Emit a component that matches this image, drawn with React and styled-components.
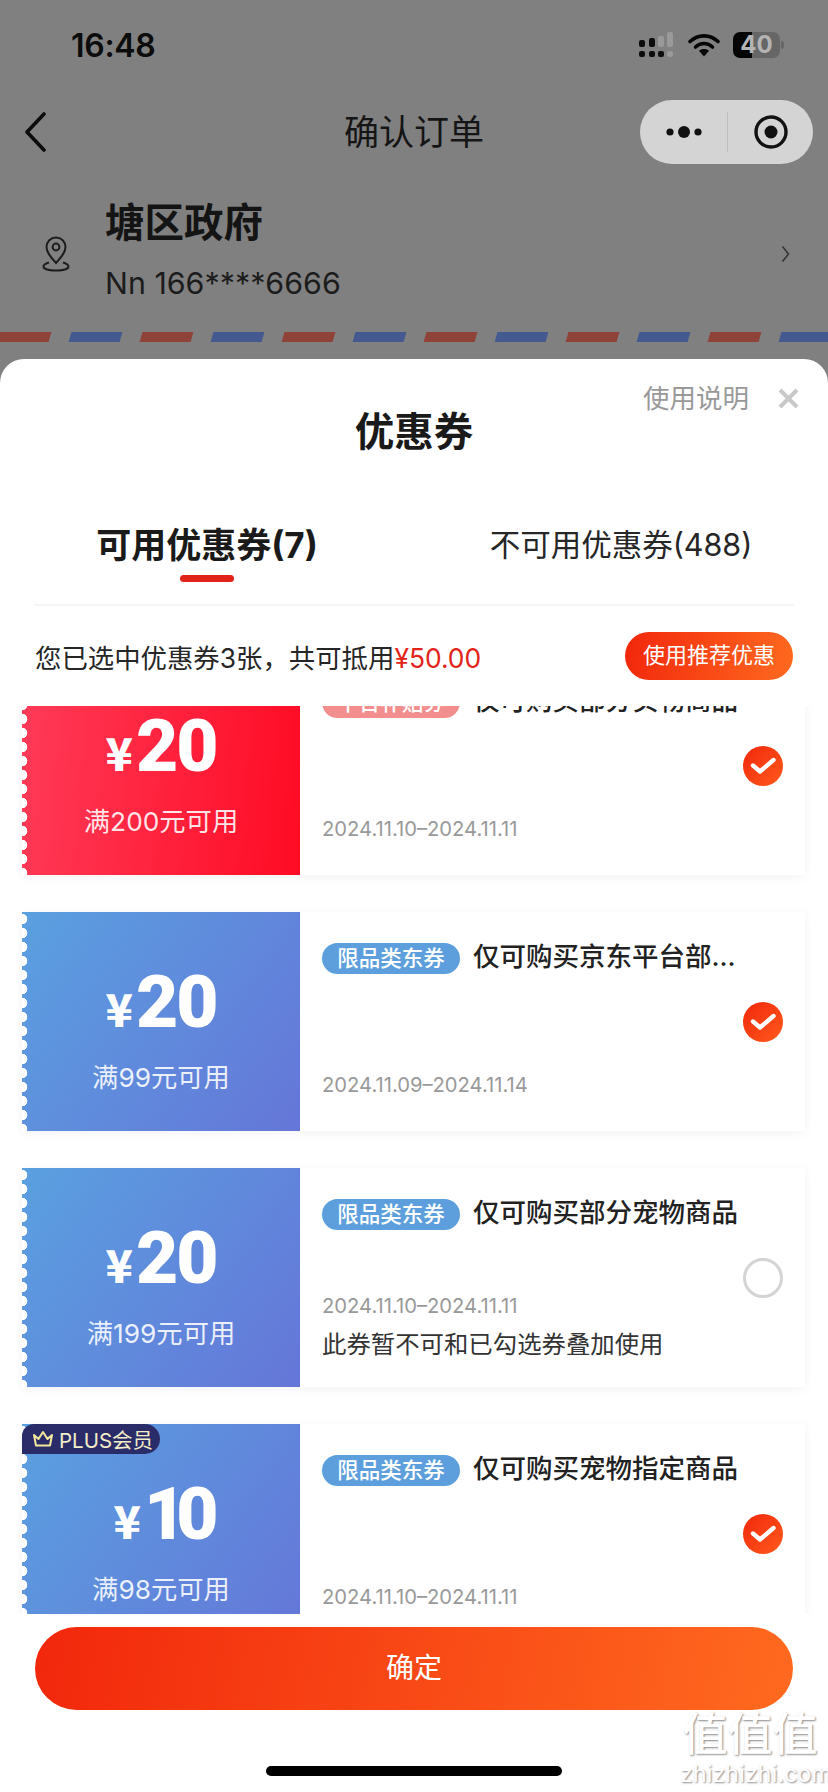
import React from "react";
import styled, { createGlobalStyle } from "styled-components";

const GlobalStyle = createGlobalStyle`
  html, body {
    margin: 0;
    padding: 0;
    background: #fff;
  }
  * {
    box-sizing: border-box;
  }
`;

const FONT = `Inter, "Noto Sans CJK SC", sans-serif`;
const CTA_GRADIENT = "linear-gradient(100deg, #f2270c 0%, #ff6a1f 100%)";

const Page = styled.div`
  position: relative;
  width: 828px;
  height: 1792px;
  overflow: hidden;
  display: flex;
  flex-direction: column;
  background: #808080;
  font-family: ${FONT};
  color: #111;
`;

const Backdrop = styled.div`
  height: 359px;
  flex: none;
`;

const StatusBar = styled.div`
  height: 90px;
  display: flex;
  align-items: center;
  justify-content: space-between;
  padding: 0 48px 0 71px;
`;

const Time = styled.div`
  font-size: 32px;
  font-weight: 600;
  letter-spacing: -0.3px;
  color: #0c0c0c;
`;

const StatusIcons = styled.div`
  display: flex;
  align-items: center;
  gap: 13px;
`;

const Battery = styled.div`
  position: relative;
  width: 47px;
  height: 26px;
  border-radius: 7px;
  background: linear-gradient(90deg, #050505 40%, #666 40%);
  color: #b4b4b4;
  font-size: 24px;
  font-weight: 700;
  line-height: 26px;
  text-align: center;

  &::after {
    content: "";
    position: absolute;
    right: -4px;
    top: 9px;
    width: 3px;
    height: 8px;
    border-radius: 0 3px 3px 0;
    background: #666;
  }
`;

const NavBar = styled.div`
  height: 83px;
  display: grid;
  grid-template-columns: 1fr auto 1fr;
  align-items: center;
`;

const BackButton = styled.div`
  display: flex;
  padding-left: 23px;
`;

const NavTitle = styled.div`
  font-size: 35px;
  line-height: 44px;
  color: #151515;
`;

const Capsule = styled.div`
  justify-self: end;
  margin-right: 15px;
  width: 173px;
  height: 64px;
  border-radius: 32px;
  background: #d4d4d4;
  display: grid;
  grid-template-columns: 87px 1px 85px;
  align-items: center;
  justify-items: center;
`;

const CapsuleDivider = styled.div`
  width: 1px;
  height: 40px;
  background: #bdbdbd;
`;

const Address = styled.div`
  margin-top: 24px;
  padding: 0 38px 0 42px;
  display: flex;
  align-items: center;

  & > svg {
    margin-top: 5px;
  }
`;

const AddressText = styled.div`
  flex: 1;
  margin-left: 35px;
  display: flex;
  flex-direction: column;
  gap: 12px;
`;

const AddressName = styled.div`
  font-size: 39.5px;
  line-height: 52px;
  font-weight: 700;
  color: #141414;
`;

const AddressPhone = styled.div`
  font-size: 30.4px;
  line-height: 44px;
  color: #1c1c1c;
`;

const Stripes = styled.div`
  margin: 27px 0 0 -1px;
  display: flex;
  gap: 20px;
`;

const Stripe = styled.div`
  flex: none;
  width: 51px;
  height: 10px;
  transform: skewX(-16deg);
  background: ${({ $blue }) => ($blue ? "#43598f" : "#8e4238")};
`;

const Sheet = styled.div`
  flex: 1;
  min-height: 0;
  display: flex;
  flex-direction: column;
  border-radius: 24px 24px 0 0;
  background: #fff;
`;

const SheetHead = styled.div`
  display: grid;
  grid-template-columns: 1fr auto 1fr;
  padding-top: 21px;
`;

const SheetTitle = styled.div`
  grid-column: 2;
  margin-top: 25px;
  font-size: 39.5px;
  line-height: 54px;
  font-weight: 700;
  color: #1a1a1a;
`;

const SheetActions = styled.div`
  grid-column: 3;
  justify-self: end;
  margin-right: 29px;
  height: 36px;
  display: flex;
  align-items: center;
  gap: 29px;
`;

const HelpLink = styled.div`
  font-size: 26.5px;
  line-height: 36px;
  color: #999;
`;

const Tabs = styled.div`
  margin-top: 56px;
  padding-bottom: 29px;
  display: grid;
  grid-template-columns: 1fr 1fr;
  justify-items: center;
`;

const Tab = styled.div`
  position: relative;
  font-size: ${({ $active }) => ($active ? "35px" : "30.5px")};
  font-weight: ${({ $active }) => ($active ? 700 : 400)};
  line-height: 60px;
  color: ${({ $active }) => ($active ? "#1a1a1a" : "#262626")};

  ${({ $active }) =>
    $active &&
    `
    &::after {
      content: "";
      position: absolute;
      left: 50%;
      bottom: -7px;
      width: 54px;
      height: 7px;
      margin-left: -27px;
      border-radius: 4px;
      background: #e2231a;
    }
  `}
`;

const Divider = styled.div`
  height: 2px;
  margin: 0 34px;
  background: #f5f5f5;
`;

const Summary = styled.div`
  height: 100px;
  padding: 0 35px;
  display: flex;
  align-items: center;
  justify-content: space-between;
`;

const SummaryText = styled.div`
  margin-top: 1px;
  font-size: 26.4px;
  color: #262626;
`;

const SummaryAmount = styled.span`
  color: #e2231a;
`;

const RecommendButton = styled.div`
  width: 168px;
  height: 48px;
  border-radius: 24px;
  background: ${CTA_GRADIENT};
  color: #fff;
  font-size: 22px;
  line-height: 47px;
  text-align: center;
`;

const CouponViewport = styled.div`
  flex: 1;
  min-height: 0;
  overflow: hidden;
`;

const CouponList = styled.div`
  margin-top: -50px;
  padding: 0 23px 0 22px;
  display: flex;
  flex-direction: column;
  gap: 37px;
`;

const Card = styled.div`
  flex: none;
  height: 219px;
  display: flex;
  background: #fff;
  box-shadow: 0 2px 10px rgba(0, 0, 0, 0.05);
`;

const Ticket = styled.div`
  position: relative;
  flex: none;
  width: 278px;
  padding-top: 50px;
  display: flex;
  flex-direction: column;
  align-items: center;
  color: #fff;
  background: ${({ $red }) =>
    $red
      ? "linear-gradient(95deg, #ff3b58 0%, #ff0b24 100%)"
      : "linear-gradient(125deg, #5aa0e0 0%, #6576d8 100%)"};

  &::before {
    content: "";
    position: absolute;
    left: 0;
    top: 0;
    bottom: 0;
    width: 6px;
    background: radial-gradient(circle at 0 50%, #fff 5px, transparent 5.6px) 0 0 / 6px 14px repeat-y;
  }
`;

const Amount = styled.div`
  height: 80px;
  display: flex;
  align-items: baseline;
  justify-content: center;
  gap: 3px;
  font-family: Roboto, sans-serif;
  font-weight: 900;
`;

const Yen = styled.span`
  font-family: "Noto Sans CJK SC", sans-serif;
  font-size: 45px;
  font-weight: 900;
  line-height: 80px;
`;

const AmountValue = styled.span`
  font-size: 73px;
  line-height: 80px;
  letter-spacing: ${({ $tight }) => ($tight ? "-10px" : "-2px")};
`;

const Threshold = styled.div`
  margin-top: 18px;
  font-size: 26.3px;
  line-height: 36px;
  color: rgba(255, 255, 255, 0.88);
`;

const PlusTag = styled.div`
  position: absolute;
  left: 0;
  top: 0;
  z-index: 1;
  height: 30px;
  width: 138px;
  padding-left: 10px;
  display: flex;
  align-items: center;
  gap: 5px;
  border-radius: 12px 15px 15px 0;
  background: #2a2c69;
  color: #f3edc8;
  font-size: 20.5px;
`;

const CardBody = styled.div`
  flex: 1;
  min-width: 0;
  display: flex;
  align-items: center;
  padding: 0 22px;
`;

const CardInfo = styled.div`
  flex: 1;
  min-width: 0;
  height: 100%;
  padding: 31px 0 ${({ $hasNote }) => ($hasNote ? "27px" : "32px")};
  display: flex;
  flex-direction: column;
`;

const TitleRow = styled.div`
  display: flex;
  align-items: flex-start;
  gap: 13px;
`;

const Badge = styled.div`
  flex: none;
  width: 138px;
  height: 31px;
  border-radius: 16px;
  background: ${({ $faded }) => ($faded ? "#f28e8e" : "#5c9fdc")};
  color: #fff;
  font-size: 21.5px;
  font-weight: 500;
  line-height: 30px;
  text-align: center;
`;

const CouponTitle = styled.div`
  margin-top: -2px;
  font-size: 26.5px;
  line-height: 31px;
  font-weight: 500;
  color: #222;
  white-space: nowrap;
`;

const Dates = styled.div`
  margin-top: auto;
  font-size: 20.2px;
  line-height: 28px;
  color: #999;
`;

const Note = styled.div`
  margin-top: 8px;
  font-size: 24.4px;
  line-height: 32px;
  color: #333;
`;

const Radio = styled.div`
  flex: none;
  width: 40px;
  height: 40px;
  border-radius: 50%;
  display: flex;
  align-items: center;
  justify-content: center;
  ${({ $checked }) =>
    $checked
      ? `background: linear-gradient(135deg, #f2270c 0%, #ff5a1c 100%);`
      : `border: 3px solid #d4d4d4;`}
`;

const Footer = styled.div`
  flex: none;
  height: 178px;
  padding: 13px 35px 0;
  display: flex;
  flex-direction: column;
  align-items: center;
`;

const ConfirmButton = styled.div`
  width: 100%;
  height: 83px;
  border-radius: 42px;
  background: ${CTA_GRADIENT};
  color: #fff;
  font-size: 28px;
  line-height: 83px;
  text-align: center;
`;

const HomeBar = styled.div`
  margin-top: 56px;
  width: 296px;
  height: 10px;
  border-radius: 5px;
  background: #000;
`;

const Watermark = styled.div`
  position: absolute;
  right: 8px;
  bottom: 6px;
  width: 140px;
  text-align: center;
  color: #fff;
  text-shadow: 1px 1px 2px #8a8a8a;
`;

const WatermarkGlyphs = styled.div`
  margin-bottom: 4px;
  font-size: 45px;
  line-height: 46px;
  font-weight: 500;
`;

const WatermarkSite = styled.div`
  font-size: 23px;
  line-height: 24px;
  letter-spacing: 0.2px;
`;

const SignalIcon = () => (
  <svg width="36" height="28" viewBox="0 0 36 28" aria-hidden="true">
    <g fill="#0c0c0c">
      <rect x="0" y="9" width="6" height="7" rx="2" />
      <rect x="10" y="7" width="6" height="9" rx="2" />
      <rect x="0" y="20" width="6" height="6" rx="2" />
      <rect x="10" y="20" width="6" height="6" rx="2" />
      <rect x="19" y="20" width="6" height="6" rx="2" />
    </g>
    <g fill="#9a9a9a">
      <rect x="19" y="5" width="6" height="11" rx="2" />
      <rect x="28" y="1" width="6" height="15" rx="2" />
      <rect x="28" y="20" width="6" height="6" rx="2" />
    </g>
  </svg>
);

const WifiIcon = () => (
  <svg width="32" height="24" viewBox="0 0 32 24" aria-hidden="true">
    <path d="M2 8.5C10 1 22 1 30 8.5" fill="none" stroke="#050505" strokeWidth="3.6" strokeLinecap="round" />
    <path d="M7.5 14C12.5 9.4 19.5 9.4 24.5 14" fill="none" stroke="#050505" strokeWidth="3.6" strokeLinecap="round" />
    <path d="M11 17.8C14 15.4 18 15.4 21 17.8L16 23.5Z" fill="#050505" />
  </svg>
);

const BackIcon = () => (
  <svg width="24" height="40" viewBox="0 0 24 40" aria-hidden="true">
    <path d="M21 2L4 20L21 38" fill="none" stroke="#0c0c0c" strokeWidth="3.6" strokeLinecap="round" strokeLinejoin="round" />
  </svg>
);

const MoreIcon = () => (
  <svg width="38" height="16" viewBox="0 0 38 16" aria-hidden="true">
    <circle cx="5" cy="8" r="3.6" fill="#111" />
    <circle cx="19" cy="8" r="6" fill="#111" />
    <circle cx="33" cy="8" r="3.6" fill="#111" />
  </svg>
);

const RecordIcon = () => (
  <svg width="34" height="34" viewBox="0 0 34 34" aria-hidden="true">
    <circle cx="17" cy="17" r="15" fill="none" stroke="#111" strokeWidth="3.4" />
    <circle cx="17" cy="17" r="6.5" fill="#111" />
  </svg>
);

const PinIcon = () => (
  <svg width="28" height="36" viewBox="0 0 28 36" aria-hidden="true">
    <g fill="none" stroke="#1d1d1d" strokeWidth="2">
      <path d="M14 27C8 20 4.5 16 4.5 11a9.5 9.5 0 0 1 19 0C23.5 16 20 20 14 27Z" />
      <circle cx="14" cy="11" r="3.4" />
      <path d="M7 26.5C3.5 27.5 1.5 29 1.5 30.5 1.5 33 7 34.5 14 34.5s12.5-1.5 12.5-4c0-1.5-2-3-5.5-4" />
    </g>
  </svg>
);

const ChevronIcon = () => (
  <svg width="9" height="18" viewBox="0 0 9 18" aria-hidden="true">
    <path d="M1.5 1.5L7.5 9L1.5 16.5" fill="none" stroke="#333" strokeWidth="1.5" />
  </svg>
);

const CloseIcon = () => (
  <svg width="21" height="21" viewBox="0 0 21 21" aria-hidden="true">
    <path d="M2 2L19 19M19 2L2 19" fill="none" stroke="#c8c8c8" strokeWidth="4" />
  </svg>
);

const CheckIcon = () => (
  <svg width="26" height="20" viewBox="0 0 26 20" aria-hidden="true">
    <path d="M3 9.5L10 15.5L23.5 4" fill="none" stroke="#fff" strokeWidth="4.4" strokeLinecap="round" strokeLinejoin="round" />
  </svg>
);

const CrownIcon = () => (
  <svg width="22" height="18" viewBox="0 0 22 18" aria-hidden="true">
    <path d="M2 5L6.5 9L11 2L15.5 9L20 5L18 15.5H4Z" fill="none" stroke="#f3e79c" strokeWidth="2" strokeLinejoin="round" />
  </svg>
);

const coupons = [
  { red: true, amount: "20", threshold: "满200元可用", faded: true, badge: "平台补贴券", title: "仅可购买部分实物商品", dates: "2024.11.10–2024.11.11", checked: true },
  { amount: "20", threshold: "满99元可用", badge: "限品类东券", title: "仅可购买京东平台部...", dates: "2024.11.09–2024.11.14", checked: true },
  { amount: "20", threshold: "满199元可用", badge: "限品类东券", title: "仅可购买部分宠物商品", dates: "2024.11.10–2024.11.11", note: "此券暂不可和已勾选券叠加使用" },
  { plus: true, amount: "10", threshold: "满98元可用", badge: "限品类东券", title: "仅可购买宠物指定商品", dates: "2024.11.10–2024.11.11", checked: true },
];

const stripes = Array.from({ length: 12 }, (_, i) => i);

const Coupon = ({ coupon }) => (
  <Card>
    <Ticket $red={coupon.red}>
      {coupon.plus && (
        <PlusTag>
          <CrownIcon />
          PLUS会员
        </PlusTag>
      )}
      <Amount>
        <Yen>¥</Yen>
        <AmountValue $tight={coupon.plus}>{coupon.amount}</AmountValue>
      </Amount>
      <Threshold>{coupon.threshold}</Threshold>
    </Ticket>
    <CardBody>
      <CardInfo $hasNote={!!coupon.note}>
        <TitleRow>
          <Badge $faded={coupon.faded}>{coupon.badge}</Badge>
          <CouponTitle>{coupon.title}</CouponTitle>
        </TitleRow>
        <Dates>{coupon.dates}</Dates>
        {coupon.note && <Note>{coupon.note}</Note>}
      </CardInfo>
      <Radio $checked={coupon.checked}>{coupon.checked && <CheckIcon />}</Radio>
    </CardBody>
  </Card>
);

const App = () => (
  <Page>
    <GlobalStyle />
    <Backdrop>
      <StatusBar>
        <Time>16:48</Time>
        <StatusIcons>
          <SignalIcon />
          <WifiIcon />
          <Battery>40</Battery>
        </StatusIcons>
      </StatusBar>
      <NavBar>
        <BackButton>
          <BackIcon />
        </BackButton>
        <NavTitle>确认订单</NavTitle>
        <Capsule>
          <MoreIcon />
          <CapsuleDivider />
          <RecordIcon />
        </Capsule>
      </NavBar>
      <Address>
        <PinIcon />
        <AddressText>
          <AddressName>塘区政府</AddressName>
          <AddressPhone>Nn 166****6666</AddressPhone>
        </AddressText>
        <ChevronIcon />
      </Address>
      <Stripes>
        {stripes.map((i) => (
          <Stripe key={i} $blue={i % 2 === 1} />
        ))}
      </Stripes>
    </Backdrop>
    <Sheet>
      <SheetHead>
        <SheetTitle>优惠券</SheetTitle>
        <SheetActions>
          <HelpLink>使用说明</HelpLink>
          <CloseIcon />
        </SheetActions>
      </SheetHead>
      <Tabs>
        <Tab $active>可用优惠券(7)</Tab>
        <Tab>不可用优惠券(488)</Tab>
      </Tabs>
      <Divider />
      <Summary>
        <SummaryText>
          您已选中优惠券3张，共可抵用<SummaryAmount>¥50.00</SummaryAmount>
        </SummaryText>
        <RecommendButton>使用推荐优惠</RecommendButton>
      </Summary>
      <CouponViewport>
        <CouponList>
          {coupons.map((coupon) => (
            <Coupon key={coupon.title} coupon={coupon} />
          ))}
        </CouponList>
      </CouponViewport>
      <Footer>
        <ConfirmButton>确定</ConfirmButton>
        <HomeBar />
      </Footer>
    </Sheet>
    <Watermark>
      <WatermarkGlyphs>值值值</WatermarkGlyphs>
      <WatermarkSite>zhizhizhi.com</WatermarkSite>
    </Watermark>
  </Page>
);

export default App;
